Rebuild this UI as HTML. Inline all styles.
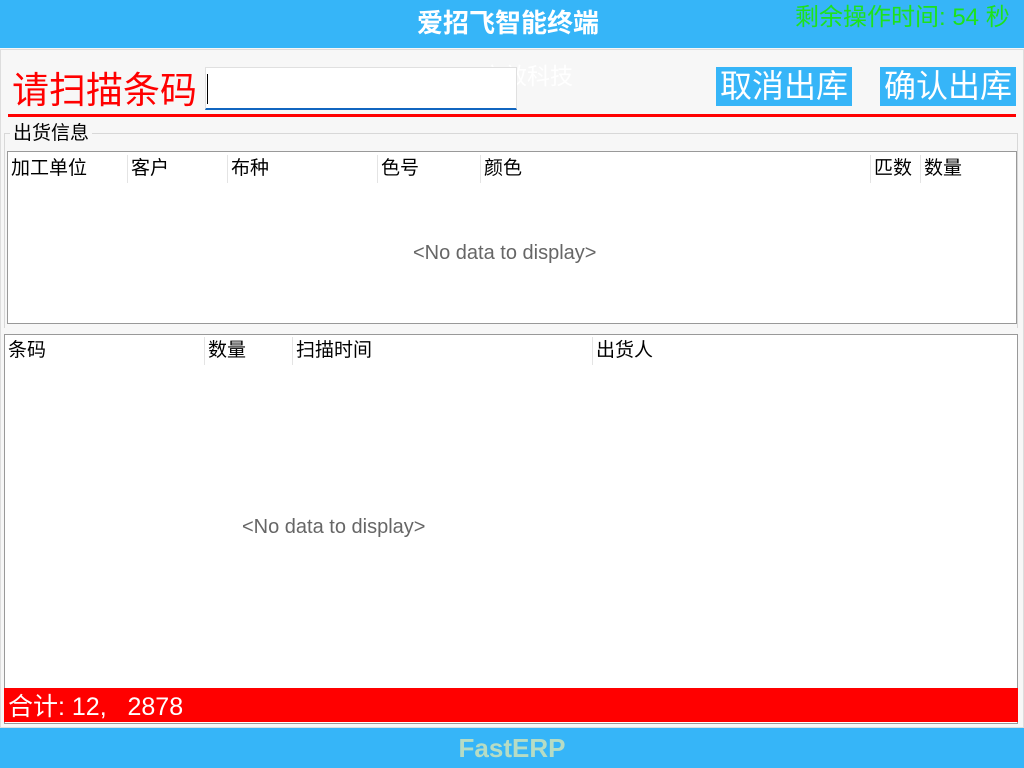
<!DOCTYPE html>
<html><head><meta charset="utf-8"><style>
*{margin:0;padding:0;box-sizing:border-box}
body{width:1024px;height:768px;overflow:hidden;background:#f7f7f7;font-family:"Liberation Sans","Noto Sans CJK SC",sans-serif;position:relative}
.a{position:absolute;white-space:nowrap}
.hdr{left:0;top:0;width:1024px;height:48px;background:#36b5f8}
.ftr{left:0;top:728px;width:1024px;height:40px;background:#36b5f8}
.btn{background:#36b5f8;color:#fff;font-size:32px;line-height:39px;text-align:center;height:39px;top:67px;width:136px}
.th{font-size:19px;color:#000;top:155px;height:28px;border-left:1px solid #e4e4e4;padding-left:3px;line-height:28px}
.th2{font-size:19px;color:#000;top:337px;height:28px;border-left:1px solid #e4e4e4;padding-left:3px;line-height:28px}
</style></head><body>
<div class="a hdr"></div>
<div class="a" style="left:0;top:6px;width:1016px;text-align:center;font-size:26px;font-weight:bold;color:#fff;line-height:34px">爱招飞智能终端</div>
<div class="a" style="left:795px;top:3px;font-size:24px;color:#1de21d;line-height:30px">剩余操作时间: 54 秒</div>
<div class="a" style="left:0;top:49px;width:1024px;height:679px;border:1px solid #ddd;background:#f7f7f7"></div>
<div class="a" style="left:481px;top:61px;font-size:23px;color:#fff;line-height:30px">高效科技</div>
<div class="a" style="left:12px;top:68px;font-size:37px;color:#f00;line-height:46px">请扫描条码</div>
<div class="a" style="left:205px;top:67px;width:312px;height:43px;background:#fff;border:1px solid #e0e0e0;border-bottom:2px solid #1166c0"></div>
<div class="a" style="left:207px;top:74px;width:1px;height:30px;background:#000"></div>
<div class="a btn" style="left:716px">取消出库</div>
<div class="a btn" style="left:880px">确认出库</div>
<div class="a" style="left:8px;top:114px;width:1008px;height:3px;background:#f00"></div>
<div class="a" style="left:4px;top:133px;width:1014px;height:195px;border:1px solid #d8d8d8;border-bottom:none"></div>
<div class="a" style="left:10px;top:122px;font-size:19px;background:#f7f7f7;padding:0 3px;line-height:24px">出货信息</div>
<div class="a" style="left:7px;top:151px;width:1010px;height:173px;background:#fff;border:1px solid #999"></div>
<div class="a th" style="left:8px;border-left:none">加工单位</div>
<div class="a th" style="left:127px">客户</div>
<div class="a th" style="left:227px">布种</div>
<div class="a th" style="left:377px">色号</div>
<div class="a th" style="left:480px">颜色</div>
<div class="a th" style="left:870px">匹数</div>
<div class="a th" style="left:920px">数量</div>
<div class="a" style="left:413px;top:240px;font-size:20px;color:#666;line-height:26px">&lt;No data to display&gt;</div>
<div class="a" style="left:4px;top:334px;width:1014px;height:390px;background:#fff;border:1px solid #999"></div>
<div class="a th2" style="left:5px;border-left:none">条码</div>
<div class="a th2" style="left:204px">数量</div>
<div class="a th2" style="left:292px">扫描时间</div>
<div class="a th2" style="left:592px">出货人</div>
<div class="a" style="left:242px;top:514px;font-size:20px;color:#666;line-height:26px">&lt;No data to display&gt;</div>
<div class="a" style="left:4px;top:688px;width:1014px;height:34px;background:#f00"></div>
<div class="a" style="left:8px;top:691px;font-size:25px;color:#fff;line-height:32px">合计: 12,&nbsp;&nbsp;&nbsp;2878</div>
<div class="a ftr"></div>
<div class="a" style="left:0;top:732px;width:1024px;text-align:center;font-size:26px;font-weight:bold;color:#b6dcc4;line-height:32px">FastERP</div>
</body></html>
